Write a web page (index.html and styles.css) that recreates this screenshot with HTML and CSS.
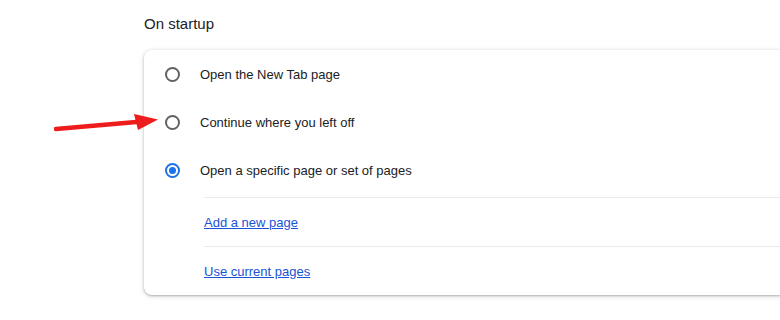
FILE: index.html
```html
<!DOCTYPE html>
<html lang="en">
<head>
  <meta charset="UTF-8">
  <title>On startup</title>
  <link rel="stylesheet" href="styles.css">
</head>
<body>
  <div class="section">
    <h2 class="section-title">On startup</h2>
    <div class="card">
      <label class="option"><span class="radio"></span>Open the New Tab page</label>
      <label class="option"><span class="radio"></span>Continue where you left off</label>
      <label class="option"><span class="radio checked"></span>Open a specific page or set of pages</label>
      <div class="sub-list">
        <div class="sub-row"><a href="#">Add a new page</a></div>
        <div class="sub-row"><a href="#">Use current pages</a></div>
      </div>
    </div>
  </div>
  <svg class="arrow" width="110" height="20" viewBox="0 0 110 20">
    <line x1="2" y1="15" x2="88" y2="7.5" stroke="#ee1c1c" stroke-width="4.5" stroke-linecap="round"/>
    <polygon points="80,0 104,5.5 84,16" fill="#ee1c1c"/>
  </svg>
</body>
</html>
```

FILE: styles.css
```css
body { margin: 0; background: #fff; font-family: "Segoe UI", "Liberation Sans", Arial, sans-serif; color: #202124; position: relative; width: 780px; height: 320px; overflow: hidden; }
.section { padding-left: 144px; }
.section-title { margin: 0; padding-top: 15px; height: 50px; box-sizing: border-box; font-size: 15px; font-weight: 400; }
.card { width: 636px; background: #fff; border-radius: 8px 0 0 8px; box-shadow: 0 1px 2px rgba(60,64,67,0.3), 0 1px 4px 1px rgba(60,64,67,0.15); }
.option { display: flex; align-items: center; height: 48px; font-size: 13px; padding-left: 21px; }
.radio { width: 11px; height: 11px; border: 2px solid #5f6368; border-radius: 50%; margin-right: 20px; box-sizing: content-box; position: relative; }
.radio.checked { border-color: #1a73e8; }
.radio.checked::after { content: ""; position: absolute; left: 2px; top: 2px; width: 7px; height: 7px; border-radius: 50%; background: #1a73e8; }
.sub-list { padding-left: 60px; margin-top: 3px; }
.sub-row { height: 48px; border-top: 1px solid #e8eaed; display: flex; align-items: center; font-size: 13px; }
.sub-row a { color: #1a53d6; text-decoration: underline; }
.arrow { position: absolute; left: 54px; top: 114px; }
```
